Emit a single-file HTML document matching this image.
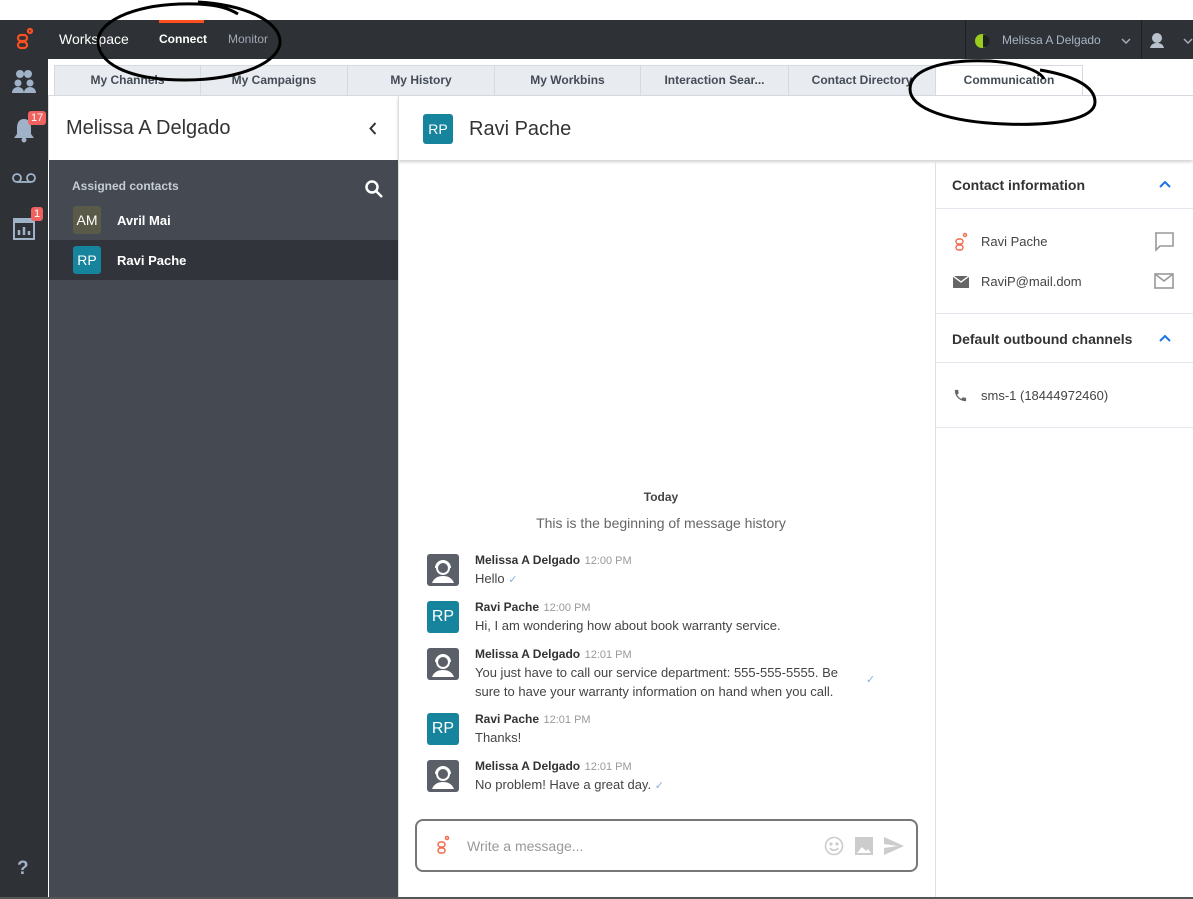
<!DOCTYPE html>
<html><head><meta charset="utf-8"><style>
*{box-sizing:border-box;margin:0;padding:0}
body{width:1193px;height:899px;position:relative;overflow:hidden;background:#fff;font-family:"Liberation Sans",Arial,sans-serif;color:#333}
.abs{position:absolute}
.top{left:0;top:20px;width:1193px;height:39px;background:#2e3135}
.rail{left:0;top:59px;width:48px;height:838px;background:#2e3135}
.tabs{left:48px;top:59px;width:1145px;height:37px;background:#fff}
.tab{position:absolute;top:6px;height:31px;background:#e8ecf1;border:1px solid #d5dae0;font-size:12px;font-weight:bold;color:#444b55;text-align:center;line-height:29px}
.badge{position:absolute;background:#f0625f;color:#fff;font-size:11px;border-radius:3px;padding:0 3px;line-height:14px}
.av{position:absolute;width:28px;height:28px;border-radius:3px;color:#fff;font-size:14px;text-align:center;line-height:28px}
.msg .n{font-size:12px;font-weight:bold;color:#333}
.msg .t{font-size:11px;color:#999;font-weight:normal}
.msg .b{font-size:13px;color:#444;line-height:19px}
.ck{color:#8ab0e0;font-size:11px}
</style></head><body>
<div class="abs top"></div>
<svg class="abs" style="left:15px;top:27px" width="20" height="24" viewBox="0 0 20 24"><g fill="none" stroke="#ff4f1f" stroke-width="2.2"><rect x="3" y="8" width="9" height="6" rx="3"/><rect x="3" y="15" width="9" height="6" rx="3"/><circle cx="15" cy="4" r="2"/></g></svg>
<div class="abs" style="left:59px;top:31px;color:#fff;font-size:14px">Workspace</div>
<div class="abs" style="left:159px;top:20px;width:45px;height:3px;background:#ff4f1f"></div>
<div class="abs" style="left:159px;top:32px;color:#fff;font-size:12px;font-weight:bold">Connect</div>
<div class="abs" style="left:228px;top:32px;color:#a0a8b4;font-size:12px">Monitor</div>
<div class="abs" style="left:965px;top:20px;width:1px;height:39px;background:#1d1f22"></div>
<div class="abs" style="left:1141px;top:20px;width:1px;height:39px;background:#1d1f22"></div>
<svg class="abs" style="left:974px;top:33px" width="16" height="16" viewBox="0 0 16 16"><circle cx="8" cy="8" r="7" fill="#9acd1e"/><path d="M9 1.5a6.5 6.5 0 0 1 0 13z" fill="#1e2124"/></svg>
<div class="abs" style="left:1002px;top:33px;color:#a9b4c6;font-size:12px">Melissa A Delgado</div>
<svg class="abs" style="left:1121px;top:38px" width="10" height="6" viewBox="0 0 10 6" fill="none" stroke="#aab" stroke-width="1.5"><path d="M1 1l4 4 4-4"/></svg>
<svg class="abs" style="left:1148px;top:31px" width="18" height="18" viewBox="0 0 18 18"><circle cx="9" cy="7" r="5" fill="#b9c2cc"/><path d="M2 17c1-4 4-5 7-5s6 1 7 5z" fill="#b9c2cc"/></svg>
<svg class="abs" style="left:1183px;top:38px" width="10" height="6" viewBox="0 0 10 6" fill="none" stroke="#aab" stroke-width="1.5"><path d="M1 1l4 4 4-4"/></svg>

<div class="abs rail"></div>
<svg class="abs" style="left:11px;top:68px" width="26" height="26" viewBox="0 0 26 26" fill="#9fb2c8"><circle cx="9" cy="6" r="4"/><circle cx="17" cy="6" r="4"/><circle cx="7" cy="15" r="3.5"/><circle cx="19" cy="15" r="3.5"/><path d="M1 25c0-4 3-6 6-6s6 2 6 6zM13 25c0-4 3-6 6-6s6 2 6 6z"/></svg>
<svg class="abs" style="left:13px;top:116px" width="22" height="28" viewBox="0 0 22 28" fill="#9fb2c8"><path d="M11 3c-5 0-7 4-7 9v6l-3 4h20l-3-4v-6c0-5-2-9-7-9z"/><circle cx="11" cy="24" r="2.5"/></svg>
<div class="badge" style="left:28px;top:111px">17</div>
<svg class="abs" style="left:11px;top:172px" width="26" height="12" viewBox="0 0 26 12" fill="none" stroke="#9fb2c8" stroke-width="1.8"><circle cx="6" cy="6" r="4"/><circle cx="20" cy="6" r="4"/><path d="M6 10h14"/></svg>
<svg class="abs" style="left:13px;top:218px" width="22" height="22" viewBox="0 0 22 22"><rect x="1" y="1" width="20" height="20" fill="none" stroke="#9fb2c8" stroke-width="2"/><rect x="1" y="1" width="20" height="4" fill="#9fb2c8"/><path d="M6 17v-5M11 17v-8M16 17v-4" stroke="#9fb2c8" stroke-width="2.5"/></svg>
<div class="badge" style="left:31px;top:207px">1</div>
<div class="abs" style="left:17px;top:858px;color:#9fb2c8;font-size:19px;font-weight:bold">?</div>

<div class="abs tabs"></div>
<div class="tab" style="left:54px;top:65px;width:147px">My Channels</div>
<div class="tab" style="left:200px;top:65px;width:148px">My Campaigns</div>
<div class="tab" style="left:347px;top:65px;width:148px">My History</div>
<div class="tab" style="left:494px;top:65px;width:147px">My Workbins</div>
<div class="tab" style="left:640px;top:65px;width:149px">Interaction Sear...</div>
<div class="tab" style="left:788px;top:65px;width:148px">Contact Directory</div>
<div class="tab" style="left:935px;top:65px;width:148px;background:#fff;border-bottom-color:#fff">Communication</div>
<div class="abs" style="left:48px;top:95px;width:1145px;height:1px;background:#d5dae0"></div>

<div class="abs" style="left:48px;top:96px;width:350px;height:64px;background:#fff;border-left:1px solid #ddd"></div>
<div class="abs" style="left:66px;top:117px;font-size:20px;color:#333">Melissa A Delgado</div>
<svg class="abs" style="left:369px;top:122px" width="8" height="13" viewBox="0 0 8 13" fill="none" stroke="#333" stroke-width="2"><path d="M6.5 1l-5 5.5 5 5.5"/></svg>
<div class="abs" style="left:49px;top:160px;width:349px;height:737px;background:#454a52"></div>
<div class="abs" style="left:72px;top:179px;font-size:12px;font-weight:bold;color:#c5ccd5">Assigned contacts</div>
<svg class="abs" style="left:364px;top:179px" width="20" height="20" viewBox="0 0 20 20" fill="none" stroke="#fff" stroke-width="2.5"><circle cx="8" cy="8" r="5.5"/><path d="M12 12l6 6"/></svg>
<div class="av" style="left:73px;top:206px;background:#5a5a48">AM</div>
<div class="abs" style="left:117px;top:213px;font-size:13px;font-weight:bold;color:#fff">Avril Mai</div>
<div class="abs" style="left:49px;top:240px;width:349px;height:40px;background:#31353b"></div>
<div class="av" style="left:73px;top:246px;background:#17849e">RP</div>
<div class="abs" style="left:117px;top:253px;font-size:13px;font-weight:bold;color:#fff">Ravi Pache</div>

<div class="abs" style="left:398px;top:96px;width:795px;height:64px;background:#fff;border-left:1px solid #ddd;box-shadow:0 2px 3px rgba(0,0,0,.18)"></div>
<div class="av" style="left:423px;top:114px;width:30px;height:30px;line-height:30px;background:#17849e">RP</div>
<div class="abs" style="left:469px;top:118px;font-size:20px;color:#333">Ravi Pache</div>
<div class="abs" style="left:398px;top:162px;width:1px;height:735px;background:#ddd"></div>
<div class="abs" style="left:935px;top:162px;width:1px;height:735px;background:#e0e0e0"></div>

<div class="abs" style="left:398px;top:490px;width:526px;text-align:center;font-size:12px;font-weight:bold;color:#444">Today</div>
<div class="abs" style="left:398px;top:515px;width:526px;text-align:center;font-size:14px;color:#666">This is the beginning of message history</div>

<div class="msg">
<svg class="abs" style="left:427px;top:554px" width="32" height="32" viewBox="0 0 32 32"><rect width="32" height="32" rx="3" fill="#5b6068"/><circle cx="16" cy="14" r="6" fill="none" stroke="#fff" stroke-width="2"/><path d="M5 29c2-5 6-7 11-7s9 2 11 7z" fill="#fff"/><path d="M9 14a7 7 0 0 1 14 0" fill="none" stroke="#fff" stroke-width="2"/></svg>
<div class="abs" style="left:475px;top:551px"><span class="n">Melissa A Delgado</span> <span class="t">12:00 PM</span><div class="b">Hello <span class="ck">✓</span></div></div>
<div class="av" style="left:427px;top:601px;width:32px;height:32px;line-height:32px;font-size:16px;background:#17849e">RP</div>
<div class="abs" style="left:475px;top:598px"><span class="n">Ravi Pache</span> <span class="t">12:00 PM</span><div class="b">Hi, I am wondering how about book warranty service.</div></div>
<svg class="abs" style="left:427px;top:648px" width="32" height="32" viewBox="0 0 32 32"><rect width="32" height="32" rx="3" fill="#5b6068"/><circle cx="16" cy="14" r="6" fill="none" stroke="#fff" stroke-width="2"/><path d="M5 29c2-5 6-7 11-7s9 2 11 7z" fill="#fff"/><path d="M9 14a7 7 0 0 1 14 0" fill="none" stroke="#fff" stroke-width="2"/></svg>
<div class="abs" style="left:475px;top:645px;width:380px"><span class="n">Melissa A Delgado</span> <span class="t">12:01 PM</span><div class="b">You just have to call our service department: 555-555-5555. Be sure to have your warranty information on hand when you call.</div></div>
<div class="abs ck" style="left:866px;top:673px">✓</div>
<div class="av" style="left:427px;top:713px;width:32px;height:32px;line-height:32px;font-size:16px;background:#17849e">RP</div>
<div class="abs" style="left:475px;top:710px"><span class="n">Ravi Pache</span> <span class="t">12:01 PM</span><div class="b">Thanks!</div></div>
<svg class="abs" style="left:427px;top:760px" width="32" height="32" viewBox="0 0 32 32"><rect width="32" height="32" rx="3" fill="#5b6068"/><circle cx="16" cy="14" r="6" fill="none" stroke="#fff" stroke-width="2"/><path d="M5 29c2-5 6-7 11-7s9 2 11 7z" fill="#fff"/><path d="M9 14a7 7 0 0 1 14 0" fill="none" stroke="#fff" stroke-width="2"/></svg>
<div class="abs" style="left:475px;top:757px"><span class="n">Melissa A Delgado</span> <span class="t">12:01 PM</span><div class="b">No problem! Have a great day. <span class="ck">✓</span></div></div>
</div>

<div class="abs" style="left:415px;top:819px;width:503px;height:53px;border:2px solid #777;border-radius:8px;background:#fff"></div>
<svg class="abs" style="left:436px;top:835px" width="14" height="20" viewBox="0 0 14 20"><g fill="none" stroke="#f26a4b" stroke-width="1.5"><rect x="2" y="7" width="7" height="5" rx="2.5"/><rect x="2" y="13" width="7" height="5" rx="2.5"/><circle cx="11" cy="3" r="1.5"/></g></svg>
<div class="abs" style="left:467px;top:838px;font-size:14px;color:#999">Write a message...</div>
<svg class="abs" style="left:824px;top:836px" width="20" height="20" viewBox="0 0 20 20" fill="none" stroke="#ccc" stroke-width="1.6"><circle cx="10" cy="10" r="8.5"/><circle cx="7" cy="8" r=".8" fill="#ccc"/><circle cx="13" cy="8" r=".8" fill="#ccc"/><path d="M6 12c2 3 6 3 8 0"/></svg>
<svg class="abs" style="left:855px;top:837px" width="18" height="18" viewBox="0 0 18 18"><rect width="18" height="18" fill="#ccc"/><path d="M2 16l5-6 4 4 2-2 3 4z" fill="#fff"/></svg>
<svg class="abs" style="left:884px;top:837px" width="20" height="18" viewBox="0 0 20 18"><path d="M0 0l20 9-20 9 0-7 14-2-14-2z" fill="#ccc"/></svg>

<div class="abs" style="left:952px;top:177px;font-size:14px;font-weight:bold;color:#333">Contact information</div>
<svg class="abs" style="left:1159px;top:180px" width="12" height="8" viewBox="0 0 12 8" fill="none" stroke="#1a73e8" stroke-width="2"><path d="M1 7l5-5 5 5"/></svg>
<div class="abs" style="left:936px;top:208px;width:257px;height:1px;background:#e3e8ee"></div>
<svg class="abs" style="left:954px;top:232px" width="14" height="20" viewBox="0 0 14 20"><g fill="none" stroke="#f26a4b" stroke-width="1.4"><rect x="2" y="7" width="7" height="5" rx="2.5"/><rect x="2" y="13" width="7" height="5" rx="2.5"/><circle cx="11" cy="3" r="1.5"/></g></svg>
<div class="abs" style="left:981px;top:234px;font-size:13px;color:#444">Ravi Pache</div>
<svg class="abs" style="left:1154px;top:232px" width="20" height="20" viewBox="0 0 20 20" fill="none" stroke="#999" stroke-width="1.6"><path d="M1 1h18v13H6l-4 4V1z"/></svg>
<svg class="abs" style="left:953px;top:276px" width="16" height="12" viewBox="0 0 16 12"><rect width="16" height="12" fill="#666"/><path d="M0 0l8 6 8-6" fill="none" stroke="#fff" stroke-width="1.4"/></svg>
<div class="abs" style="left:981px;top:274px;font-size:13px;color:#444">RaviP@mail.dom</div>
<svg class="abs" style="left:1154px;top:273px" width="20" height="16" viewBox="0 0 20 16" fill="none" stroke="#999" stroke-width="1.6"><rect x="1" y="1" width="18" height="14"/><path d="M1 1l9 7 9-7"/></svg>
<div class="abs" style="left:936px;top:313px;width:257px;height:1px;background:#e3e8ee"></div>
<div class="abs" style="left:952px;top:331px;font-size:14px;font-weight:bold;color:#333">Default outbound channels</div>
<svg class="abs" style="left:1159px;top:334px" width="12" height="8" viewBox="0 0 12 8" fill="none" stroke="#1a73e8" stroke-width="2"><path d="M1 7l5-5 5 5"/></svg>
<div class="abs" style="left:936px;top:362px;width:257px;height:1px;background:#e3e8ee"></div>
<svg class="abs" style="left:953px;top:388px" width="15" height="15" viewBox="0 0 24 24"><path fill="#666" d="M6.6 10.8c1.4 2.8 3.8 5.1 6.6 6.6l2.2-2.2c.3-.3.7-.4 1-.2 1.1.4 2.3.6 3.6.6.6 0 1 .4 1 1V20c0 .6-.4 1-1 1C10.6 21 3 13.4 3 4c0-.6.4-1 1-1h3.5c.6 0 1 .4 1 1 0 1.3.2 2.5.6 3.6.1.3 0 .7-.2 1z"/></svg>
<div class="abs" style="left:981px;top:388px;font-size:13px;color:#444">sms-1 (18444972460)</div>
<div class="abs" style="left:936px;top:427px;width:257px;height:1px;background:#e3e8ee"></div>

<div class="abs" style="left:0;top:897px;width:1193px;height:2px;background:#555"></div>

<svg class="abs" style="left:0;top:0" width="1193" height="899" viewBox="0 0 1193 899" fill="none" stroke="#000" stroke-width="3">
<path d="M198 2c50 3 80 20 82 38 2 22-40 40-95 40-60 0-88-18-87-40 2-20 40-38 100-36 20 1 30 4 40 10"/>
<path d="M1040 70c30 5 55 15 55 32 0 17-40 24-90 22-55-2-95-15-95-35 0-20 35-30 80-28 30 2 50 10 54 18"/>
</svg>
</body></html>
